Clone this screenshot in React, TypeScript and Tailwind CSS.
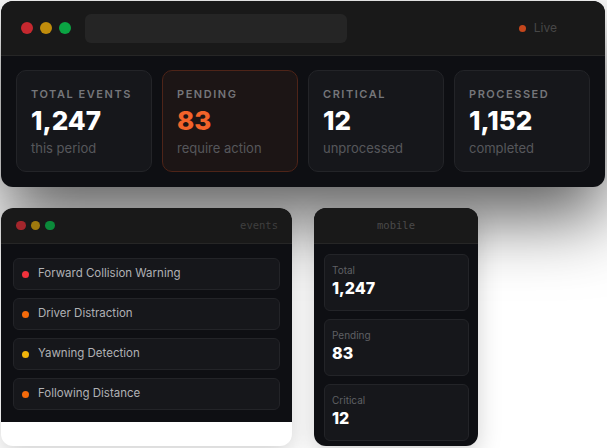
const sans = { fontFamily: 'Inter, "Noto Sans", sans-serif' }

const stats = [
  { label: 'Total Events', value: '1,247', sub: 'this period', accent: false },
  { label: 'Pending', value: '83', sub: 'require action', accent: true },
  { label: 'Critical', value: '12', sub: 'unprocessed', accent: false },
  { label: 'Processed', value: '1,152', sub: 'completed', accent: false },
]

const events = [
  { name: 'Forward Collision Warning', dot: 'bg-[#f0323c]' },
  { name: 'Driver Distraction', dot: 'bg-[#f46a0a]' },
  { name: 'Yawning Detection', dot: 'bg-[#f0b40a]' },
  { name: 'Following Distance', dot: 'bg-[#f46a0a]' },
]

const mobile = [
  { label: 'Total', value: '1,247' },
  { label: 'Pending', value: '83' },
  { label: 'Critical', value: '12' },
]

function Lights({ size }: { size: 'lg' | 'sm' }) {
  if (size === 'lg') {
    return (
      <div className="flex items-center gap-[7px]">
        <span className="w-3 h-3 rounded-full bg-[#c5282f]" />
        <span className="w-3 h-3 rounded-full bg-[#c08c0c]" />
        <span className="w-3 h-3 rounded-full bg-[#0ba443]" />
      </div>
    )
  }
  return (
    <div className="flex items-center gap-[5px]">
      <span className="w-[9.5px] h-[9.5px] rounded-full bg-[#a3262c]" />
      <span className="w-[9.5px] h-[9.5px] rounded-full bg-[#a07a0e]" />
      <span className="w-[9.5px] h-[9.5px] rounded-full bg-[#0b8a3a]" />
    </div>
  )
}

export default function App() {
  return (
    <div className="w-[607px] h-[448px] bg-white overflow-hidden pl-[1px] pt-[1px]" style={sans}>
      {/* desktop window */}
      <div className="w-[604px] rounded-[12px] overflow-hidden bg-[#0e0f13] shadow-[0_30px_70px_rgba(0,0,0,0.65)]">
        <div className="h-[55px] bg-[#191919] border-b border-[#262626] flex items-center pl-[20px] pr-[48px]">
          <Lights size="lg" />
          <div className="ml-[14px] w-[262px] h-[29px] rounded-[6px] bg-[#252525]" />
          <div className="flex-1" />
          <div className="flex items-center gap-[8px]">
            <span className="w-[7px] h-[7px] rounded-full bg-[#c4461c]" />
            <span className="text-[12px] text-[#474747]">Live</span>
          </div>
        </div>
        <div className="flex gap-[10px] px-[15px] pt-[14px] pb-[15px]">
          {stats.map((s) => (
            <div
              key={s.label}
              className={
                s.accent
                  ? 'w-[136px] h-[102px] rounded-[10px] border border-[#4e2418] bg-[#1c1515] pl-[14px] pt-[16px]'
                  : 'w-[136px] h-[102px] rounded-[10px] border border-[#232428] bg-[#16171b] pl-[14px] pt-[16px]'
              }
            >
              <div className="text-[11px] leading-[14px] font-semibold uppercase tracking-[0.14em] text-[#75767a]">
                {s.label}
              </div>
              <div
                className={
                  s.accent
                    ? 'mt-[5px] text-[26px] leading-[30px] font-extrabold text-[#f2632a]'
                    : 'mt-[5px] text-[26px] leading-[30px] font-extrabold text-white'
                }
              >
                {s.value}
              </div>
              <div className="mt-[3px] text-[13px] leading-[18px] text-[#56575b]">{s.sub}</div>
            </div>
          ))}
        </div>
      </div>

      <div className="flex gap-[22px] mt-[21px]">
        {/* events window */}
        <div className="w-[291px] h-[238px] rounded-[12px] overflow-hidden bg-white shadow-[0_8px_24px_rgba(0,0,0,0.18)]">
          <div className="h-[36px] bg-[#191919] border-b border-[#262626] flex items-center pl-[15px] pr-[14px]">
            <Lights size="sm" />
            <div className="flex-1" />
            <span className="text-[10.5px] text-[#3f3f3f]" style={{ fontFamily: '"DejaVu Sans Mono", monospace' }}>
              events
            </span>
          </div>
          <div className="h-[178px] bg-[#0e0f13] px-[12px] pt-[14px] flex flex-col gap-[8px]">
            {events.map((e) => (
              <div
                key={e.name}
                className="h-[32px] rounded-[6px] border border-[#232428] bg-[#16171b] flex items-center pl-[8px] gap-[9px]"
              >
                <span className={`w-[7px] h-[7px] rounded-full ${e.dot}`} />
                <span className="text-[11.5px] text-[#b0b1b5]">{e.name}</span>
              </div>
            ))}
          </div>
        </div>

        {/* mobile window */}
        <div className="w-[164px] h-[238px] rounded-[12px] overflow-hidden bg-[#0e0f13] shadow-[0_8px_24px_rgba(0,0,0,0.18)]">
          <div className="h-[36px] bg-[#191919] border-b border-[#262626] flex items-center justify-center">
            <span className="text-[10.5px] text-[#4a4a4a]" style={{ fontFamily: '"DejaVu Sans Mono", monospace' }}>
              mobile
            </span>
          </div>
          <div className="pl-[10px] pr-[9px] pt-[10px] flex flex-col gap-[8px]">
            {mobile.map((m) => (
              <div key={m.label} className="h-[57px] rounded-[6px] border border-[#232428] bg-[#16171b] pl-[7px] pt-[8px]">
                <div className="text-[10px] leading-[14px] text-[#5f6064]">{m.label}</div>
                <div className="text-[16px] leading-[22px] font-extrabold text-white">{m.value}</div>
              </div>
            ))}
          </div>
        </div>
      </div>
    </div>
  )
}
